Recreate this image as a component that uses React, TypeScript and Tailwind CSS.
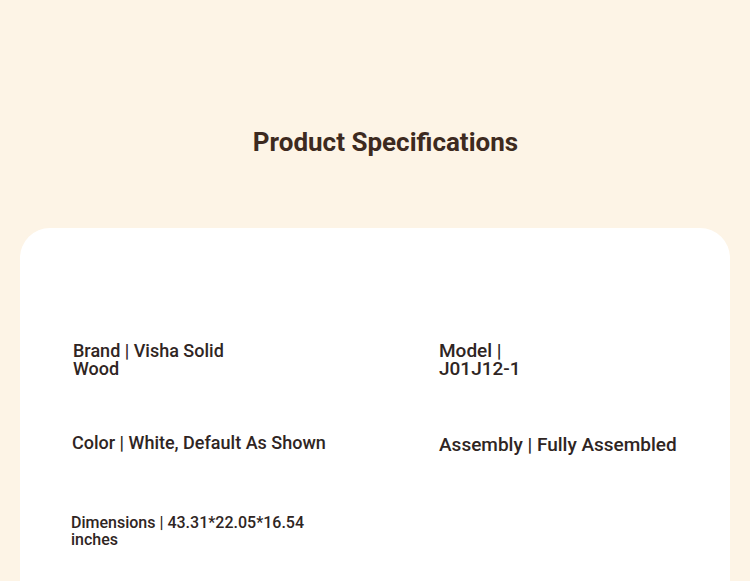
export default function App() {
  return (
    <div
      className="h-[581px] w-[750px] overflow-hidden bg-[#fdf4e6] text-[#2f2523]"
      style={{ fontFamily: 'Roboto, "Liberation Sans", sans-serif' }}
    >
      <div className="flex h-[228px] items-start justify-center pl-[21px] pt-[125px]">
        <h1 className="text-[26px] font-bold leading-[34px] text-[#3d2a20]">Product Specifications</h1>
      </div>

      <div className="mx-5 h-[400px] rounded-[30px] bg-white pl-[53px] pt-[114px]">
        <div className="grid grid-cols-[366px_1fr] grid-rows-[91px_81px_auto] font-medium">
          <p className="w-[170px] text-[18px] leading-[18px]">Brand | Visha Solid Wood</p>
          <p className="text-[19px] leading-[18px]">
            Model |
            <br />
            J01J12-1
          </p>
          <p className="-ml-px pt-px text-[18px] leading-[18px]">Color | White, Default As Shown</p>
          <p className="pt-[2px] text-[19px] leading-[19px]">Assembly | Fully Assembled</p>
          <p className="-ml-0.5 w-[250px] text-[16px] leading-[17px]">Dimensions | 43.31*22.05*16.54 inches</p>
        </div>
      </div>
    </div>
  )
}
